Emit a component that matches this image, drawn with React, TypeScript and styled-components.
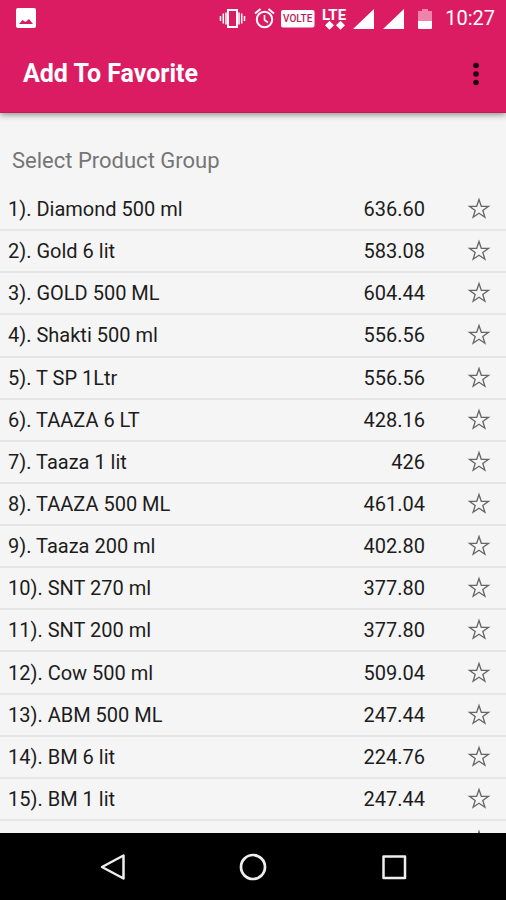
import React, { useState } from "react";
import styled, { createGlobalStyle } from "styled-components";

const GlobalStyle = createGlobalStyle`
  *, *::before, *::after { box-sizing: border-box; }
  body { margin: 0; background: #f5f5f5; font-family: Roboto, "Liberation Sans", sans-serif; }
  button { border: 0; padding: 0; background: none; color: inherit; font: inherit; cursor: pointer; }
`;

const Screen = styled.div`
  display: flex;
  flex-direction: column;
  height: 100vh;
  background: #f5f5f5;
  color: #1c1c1c;
`;

const Header = styled.header`
  flex: none;
  background: #dc1c62;
  color: #fff;
  border-bottom: 1px solid #c81858;
  box-shadow: 0 2px 6px rgba(0, 0, 0, 0.4);
`;

const StatusBar = styled.div`
  display: flex;
  align-items: center;
  justify-content: space-between;
  height: 36px;
  padding: 0 11px 0 16px;
`;

const StatusIcons = styled.div`
  display: flex;
  align-items: center;
  svg { display: block; }
`;

const Clock = styled.time`
  margin-left: 12px;
  font-size: 20px;
  line-height: 36px;
`;

const AppBar = styled.div`
  display: flex;
  align-items: center;
  justify-content: space-between;
  height: 76px;
  padding: 0 18px 0 23px;
`;

const Title = styled.h1`
  margin: 0;
  font-size: 25px;
  line-height: 32px;
  font-weight: 700;
`;

const MenuButton = styled.button`
  display: grid;
  place-items: center;
  width: 24px;
  height: 40px;
`;

const Main = styled.main`
  flex: 1;
  min-height: 0;
  display: flex;
  flex-direction: column;
`;

const GroupHeading = styled.h2`
  flex: none;
  margin: 0;
  padding: 32px 12px 12px;
  font-size: 22px;
  line-height: 32px;
  font-weight: 400;
  color: #757575;
`;

const ProductList = styled.ul`
  flex: 1;
  min-height: 0;
  margin: 0;
  padding: 0;
  list-style: none;
  display: grid;
  grid-template-rows: repeat(15, minmax(42px, 1fr)) 12px;
  overflow-y: auto;
  scrollbar-width: none;
`;

const ProductRow = styled.li<{ $peek?: boolean }>`
  display: flex;
  align-items: ${(p) => (p.$peek ? "flex-start" : "center")};
  min-height: 0;
  padding: 0 15px 0 8px;
  overflow: hidden;
  font-size: 20px;
  line-height: 40px;
  border-bottom: ${(p) => (p.$peek ? "0" : "2px solid #e6e6e6")};
`;

const ProductName = styled.span`
  flex: 1;
`;

const Price = styled.span`
  margin-right: 41px;
`;

const StarButton = styled.button`
  display: grid;
  place-items: center;
  width: 25px;
  height: 40px;
  color: #666;
`;

const NavBar = styled.nav`
  flex: none;
  display: grid;
  grid-template-columns: repeat(3, 1fr);
  height: 67px;
  padding: 0 42px 0 43px;
  background: #000;
  color: #eee;
`;

const NavButton = styled.button`
  display: grid;
  place-items: center;
`;

const products: [string, string][] = [
  ["Diamond 500 ml", "636.60"],
  ["Gold 6 lit", "583.08"],
  ["GOLD 500 ML", "604.44"],
  ["Shakti 500 ml", "556.56"],
  ["T SP 1Ltr", "556.56"],
  ["TAAZA 6 LT", "428.16"],
  ["Taaza 1 lit", "426"],
  ["TAAZA 500 ML", "461.04"],
  ["Taaza 200 ml", "402.80"],
  ["SNT 270 ml", "377.80"],
  ["SNT 200 ml", "377.80"],
  ["Cow 500 ml", "509.04"],
  ["ABM 500 ML", "247.44"],
  ["BM 6 lit", "224.76"],
  ["BM 1 lit", "247.44"],
];

function Star({ filled = false }: { filled?: boolean }) {
  return (
    <svg width="24" height="24" viewBox="0 0 24 24" fill={filled ? "currentColor" : "none"} stroke="currentColor" strokeWidth="1.3" aria-hidden="true">
      <path d="M12 2.500 14.300 9.300H21.500L15.800 13.500 17.900 20.200 12 16.200 6.100 20.200 8.200 13.500 2.500 9.300H9.700Z" />
    </svg>
  );
}

function StatusGlyphs() {
  return (
    <svg width="215" height="28" viewBox="217 3 215 28" fill="none" aria-hidden="true">
      <g stroke="#fff">
        <path d="M219.500 15v5M222.300 12.500v10M225 11.500v12M238 11.500v12M240.700 12.500v10M243.500 15v5" strokeWidth="1.5" />
        <rect x="227" y="9" width="9" height="17" strokeWidth="2" />
        <circle cx="263.500" cy="18.500" r="7.700" strokeWidth="2" />
        <path d="M263.500 14v5l3.500 2.500" strokeWidth="1.6" />
        <path d="M254 12.500 259.500 8M273 12.500 267.500 8" strokeWidth="2" />
      </g>
      <rect x="280" y="9" width="33.500" height="17.500" rx="2" fill="#fff" />
      <text x="296.700" y="21" textAnchor="middle" fontSize="10" fontWeight="500" fill="#b81c58">VOLTE</text>
      <text x="333" y="18.500" textAnchor="middle" fontSize="15" fontWeight="700" fill="#fff">LTE</text>
      <path d="M328.500 19.800 333 24.300 328.500 28.800 324 24.300ZM339.500 19.800 344 24.300 339.500 28.800 335 24.300Z" fill="#fff" />
      <path d="M373 8v20h-21ZM403 8v20h-21Z" fill="#fff" />
      <path d="M421 8h6v2h4v10h-14V10h4Z" fill="#ee83ab" />
      <path d="M417 20h14v7q0 1-1 1h-12q-1 0-1-1Z" fill="#fff" />
    </svg>
  );
}

export default function App() {
  const [favorites, setFavorites] = useState<number[]>([]);
  const toggle = (i: number) =>
    setFavorites((list) => (list.includes(i) ? list.filter((n) => n !== i) : [...list, i]));

  return (
    <Screen>
      <GlobalStyle />
      <Header>
        <StatusBar>
          <svg width="20" height="20" viewBox="0 0 20 20" aria-hidden="true">
            <path fill="#fff" fillRule="evenodd" d="M2 0h16q2 0 2 2v16q0 2-2 2H2q-2 0-2-2V2Q0 0 2 0ZM3 16h14l-4-5-3.500 3L6.500 12Z" />
          </svg>
          <StatusIcons>
            <StatusGlyphs />
            <Clock>10:27</Clock>
          </StatusIcons>
        </StatusBar>
        <AppBar>
          <Title>Add To Favorite</Title>
          <MenuButton aria-label="More options">
            <svg width="8" height="24" viewBox="0 0 8 24" fill="#1c0610" aria-hidden="true">
              <circle cx="4" cy="3.500" r="2.800" />
              <circle cx="4" cy="12" r="2.800" />
              <circle cx="4" cy="20.500" r="2.800" />
            </svg>
          </MenuButton>
        </AppBar>
      </Header>
      <Main>
        <GroupHeading>Select Product Group</GroupHeading>
        <ProductList>
          {products.map(([name, price], i) => (
            <ProductRow key={name}>
              <ProductName>{`${i + 1}). ${name}`}</ProductName>
              <Price>{price}</Price>
              <StarButton aria-label={`Favorite ${name}`} aria-pressed={favorites.includes(i)} onClick={() => toggle(i)}>
                <Star filled={favorites.includes(i)} />
              </StarButton>
            </ProductRow>
          ))}
          <ProductRow $peek>
            <ProductName />
            <StarButton aria-label="Favorite next product">
              <Star />
            </StarButton>
          </ProductRow>
        </ProductList>
      </Main>
      <NavBar aria-label="System navigation">
        <NavButton aria-label="Back">
          <svg width="28" height="28" viewBox="0 0 28 28" fill="none" stroke="currentColor" strokeWidth="2.500" strokeLinejoin="round" aria-hidden="true">
            <path d="M3 14 24.500 2.500v23Z" />
          </svg>
        </NavButton>
        <NavButton aria-label="Home">
          <svg width="28" height="28" viewBox="0 0 28 28" fill="none" stroke="currentColor" strokeWidth="2.700" aria-hidden="true">
            <circle cx="14" cy="14" r="12" />
          </svg>
        </NavButton>
        <NavButton aria-label="Recent apps">
          <svg width="28" height="28" viewBox="0 0 28 28" fill="none" stroke="currentColor" strokeWidth="2.500" strokeLinejoin="round" aria-hidden="true">
            <rect x="3.500" y="3.500" width="21.500" height="21.500" />
          </svg>
        </NavButton>
      </NavBar>
    </Screen>
  );
}
